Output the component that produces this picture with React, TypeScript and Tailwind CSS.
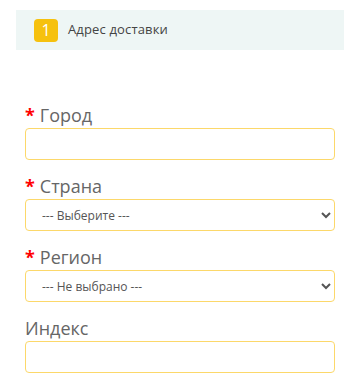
const fieldLabel = "flex items-center h-6 text-[18px] leading-6 text-[#666]";
const star = "text-[#ff0000] font-bold mr-[5px]";
const control =
  "block w-full h-8 rounded-[4px] border border-[#fcd86a] bg-white text-[#555] outline-none";

export default function App() {
  return (
    <div className="w-[360px] h-[384px] bg-white pt-[10px] overflow-hidden" style={{ fontFamily: '"Open Sans", sans-serif' }}>
      <div className="mx-4 h-10 bg-[#eef6f5] flex items-center pl-[18px]">
        <span className="w-6 h-[23px] rounded-[4px] bg-[#f6c10e] text-white text-[16px] leading-none flex items-center justify-center">
          1
        </span>
        <span className="ml-[10px] text-[13px] tracking-[0.15px] text-[#444]">Адрес доставки</span>
      </div>

      <div className="px-[25px] pt-[53px] flex flex-col gap-[14px]">
        <div>
          <label className={fieldLabel}>
            <span className={star}>*</span>Город
          </label>
          <input type="text" className={`${control} text-[13px] mt-px px-3`} />
        </div>
        <div>
          <label className={fieldLabel}>
            <span className={star}>*</span>Страна
          </label>
          <select className={`${control} text-[12px] mt-px pl-3 pr-1`} defaultValue="">
            <option value="">--- Выберите ---</option>
          </select>
        </div>
        <div>
          <label className={fieldLabel}>
            <span className={star}>*</span>Регион
          </label>
          <select className={`${control} text-[12px] mt-px pl-3 pr-1`} defaultValue="">
            <option value="">--- Не выбрано ---</option>
          </select>
        </div>
        <div>
          <label className={fieldLabel}>Индекс</label>
          <input type="text" className={`${control} text-[13px] mt-px px-3`} />
        </div>
      </div>
    </div>
  );
}
